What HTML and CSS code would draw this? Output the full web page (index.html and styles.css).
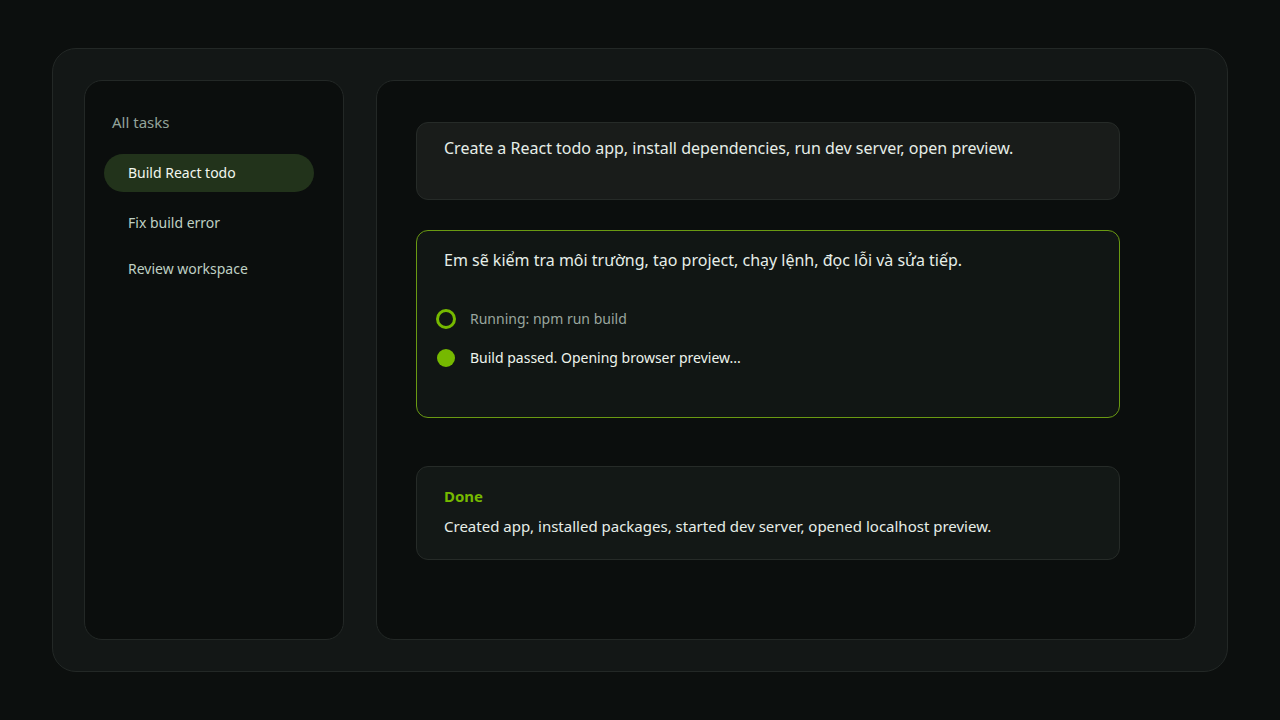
FILE: index.html
```html
<!DOCTYPE html>
<html lang="vi">
<head>
    <meta charset="UTF-8">
    <meta name="viewport" content="width=device-width, initial-scale=1.0">
    <title>Agent tasks</title>
    <link rel="stylesheet" href="styles.css">
</head>
<body>

    <div class="frame">
        <!-- Task list -->
        <aside class="sidebar">
            <div class="sidebar-title">All tasks</div>
            <div class="task active">Build React todo</div>
            <div class="task">Fix build error</div>
            <div class="task">Review workspace</div>
        </aside>

        <!-- Conversation -->
        <main class="main">
            <div class="card prompt">
                Create a React todo app, install dependencies, run dev server, open preview.
            </div>

            <div class="card reply">
                <p class="reply-text">Em sẽ kiểm tra môi trường, tạo project, chạy lệnh, đọc lỗi và sửa tiếp.</p>
                <div class="step running">
                    <span class="dot ring"></span>
                    <span>Running: npm run build</span>
                </div>
                <div class="step passed">
                    <span class="dot fill"></span>
                    <span>Build passed. Opening browser preview...</span>
                </div>
            </div>

            <div class="card result">
                <div class="result-title">Done</div>
                <div class="result-text">Created app, installed packages, started dev server, opened localhost preview.</div>
            </div>
        </main>
    </div>

</body>
</html>
```

FILE: styles.css
```css
/* Global Styles */
body {
    font-family: "Noto Sans", "Open Sans", sans-serif;
    margin: 0;
    padding: 48px 52px;
    background-color: #0c0f0e;
    color: #e6eee8;
    height: 100vh;
    box-sizing: border-box;
}

/* Outer frame */
.frame {
    height: 624px;
    box-sizing: border-box;
    background-color: #131716;
    border: 1px solid #232826;
    border-radius: 24px;
    padding: 31px;
    display: flex;
    gap: 32px;
}

/* Sidebar */
.sidebar {
    width: 260px;
    flex-shrink: 0;
    box-sizing: border-box;
    background-color: #0b0e0d;
    border: 1px solid #232826;
    border-radius: 18px;
    padding: 30px 29px 0 19px;
    display: flex;
    flex-direction: column;
}

.sidebar-title {
    font-size: 15px;
    color: #93a39a;
    padding-left: 8px;
    line-height: 22px;
    margin-bottom: 21px;
}

.task {
    font-size: 14px;
    color: #bfd0c3;
    height: 38px;
    line-height: 38px;
    padding: 0 24px;
    border-radius: 19px;
    margin-bottom: 8px;
}

.task.active {
    background-color: #22331b;
    color: #f2f7ee;
    margin-bottom: 12px;
}

/* Main panel */
.main {
    flex: 1;
    box-sizing: border-box;
    background-color: #0b0e0d;
    border: 1px solid #232826;
    border-radius: 18px;
    padding: 41px 75px 0 39px;
    display: flex;
    flex-direction: column;
}

.card {
    border: 1px solid #262b28;
    border-radius: 12px;
    padding: 0 27px;
    font-size: 16px;
    line-height: 24px;
}

.prompt {
    background-color: #191c1a;
    height: 78px;
    box-sizing: border-box;
    padding-top: 13px;
    margin-bottom: 30px;
}

.reply {
    background-color: #111614;
    border-color: #6a9a12;
    height: 188px;
    box-sizing: border-box;
    padding-top: 17px;
    margin-bottom: 48px;
}

.reply-text {
    margin: 0 0 37px;
}

.step {
    display: flex;
    align-items: center;
    gap: 14px;
    font-size: 14px;
    height: 20px;
    margin-bottom: 19px;
    margin-left: -8px;
}

.step.running { color: #9aa69f; }
.step.passed { color: #eef4ec; }

.dot {
    width: 20px;
    height: 20px;
    border-radius: 50%;
    box-sizing: border-box;
    flex-shrink: 0;
}

.dot.ring { border: 3px solid #76b900; }
.dot.fill {
    background-color: #76b900;
    width: 18px;
    height: 18px;
    margin: 0 1px;
}

.result {
    background-color: #131816;
    height: 94px;
    box-sizing: border-box;
    padding-top: 18px;
}

.result-title {
    color: #76b900;
    font-weight: bold;
    font-size: 15px;
    line-height: 22px;
    margin-bottom: 7px;
}

.result-text {
    font-size: 15px;
}
```
